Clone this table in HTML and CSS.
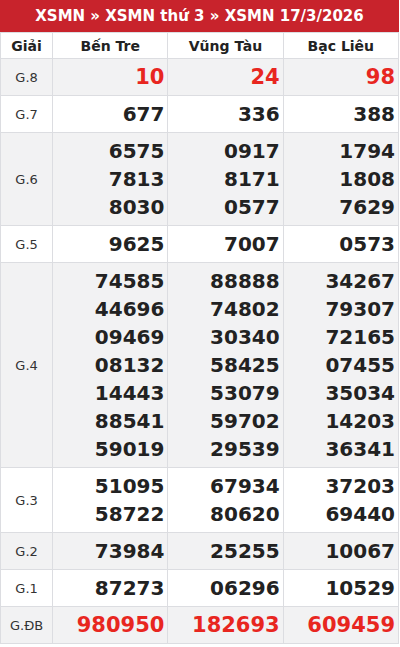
FILE: index.html
```html
<!DOCTYPE html>
<html lang="vi">
<head>
<meta charset="utf-8">
<link rel="stylesheet" href="styles.css">
</head>
<body>
<div class="box">
  <h2 class="title">XSMN » XSMN thứ 3 » XSMN 17/3/2026</h2>
  <table class="kq">
    <colgroup><col class="c-label"><col class="c-prov"><col class="c-prov"><col class="c-prov"></colgroup>
    <thead>
      <tr><th>Giải</th><th>Bến Tre</th><th>Vũng Tàu</th><th>Bạc Liêu</th></tr>
    </thead>
    <tbody>
      <tr class="alt"><td class="lbl">G.8</td><td class="num big red">10</td><td class="num big red">24</td><td class="num big red">98</td></tr>
      <tr><td class="lbl">G.7</td><td class="num">677</td><td class="num">336</td><td class="num">388</td></tr>
      <tr class="alt"><td class="lbl">G.6</td><td class="num">6575<br>7813<br>8030</td><td class="num">0917<br>8171<br>0577</td><td class="num">1794<br>1808<br>7629</td></tr>
      <tr><td class="lbl">G.5</td><td class="num">9625</td><td class="num">7007</td><td class="num">0573</td></tr>
      <tr class="alt"><td class="lbl">G.4</td><td class="num">74585<br>44696<br>09469<br>08132<br>14443<br>88541<br>59019</td><td class="num">88888<br>74802<br>30340<br>58425<br>53079<br>59702<br>29539</td><td class="num">34267<br>79307<br>72165<br>07455<br>35034<br>14203<br>36341</td></tr>
      <tr><td class="lbl">G.3</td><td class="num">51095<br>58722</td><td class="num">67934<br>80620</td><td class="num">37203<br>69440</td></tr>
      <tr class="alt"><td class="lbl">G.2</td><td class="num">73984</td><td class="num">25255</td><td class="num">10067</td></tr>
      <tr><td class="lbl">G.1</td><td class="num">87273</td><td class="num">06296</td><td class="num">10529</td></tr>
      <tr class="alt"><td class="lbl">G.ĐB</td><td class="num big red">980950</td><td class="num big red">182693</td><td class="num big red">609459</td></tr>
    </tbody>
  </table>
</div>
</body>
</html>
```
FILE: styles.css
```css
html, body {
  margin: 0;
  padding: 0;
  background: #ffffff;
}
body {
  font-family: "DejaVu Sans", Verdana, sans-serif;
  color: #222222;
}
.box {
  width: 399px;
}
.title {
  margin: 0;
  height: 32px;
  line-height: 32px;
  background: #c8232c;
  color: #ffffff;
  font-size: 15px;
  font-weight: bold;
  text-align: center;
}
.kq {
  width: 399px;
  border-collapse: collapse;
  table-layout: fixed;
}
.c-label { width: 52px; }
.c-prov { width: 115px; }
.kq th, .kq td {
  border: 1px solid #dcdde1;
}
.kq th {
  height: 25px;
  padding: 0;
  font-size: 14px;
  font-weight: bold;
  color: #222222;
  text-align: center;
  background: #ffffff;
}
.kq tr.alt td {
  background: #f2f2f3;
}
.lbl {
  text-align: center;
  font-size: 13px;
  color: #333333;
  padding: 0;
}
.num {
  text-align: right;
  padding: 4px 3px 4px 0;
  font-size: 20px;
  line-height: 28px;
  font-weight: bold;
  color: #222222;
}
.num.big {
  font-size: 21px;
}
.num.red {
  color: #e8261f;
}
```
